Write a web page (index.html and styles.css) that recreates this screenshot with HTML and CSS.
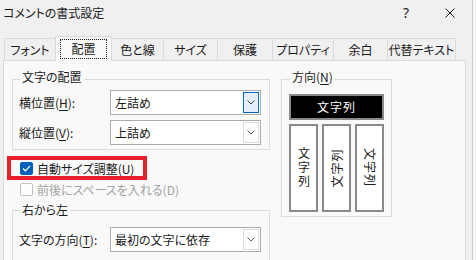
FILE: index.html
```html
<!DOCTYPE html>
<html lang="ja">
<head>
    <meta charset="UTF-8">
    <title>コメントの書式設定</title>
    <link rel="stylesheet" href="styles.css">
</head>
<body>
    <div class="dialog">
        <div class="titlebar">
            <span class="title">コメントの書式設定</span>
            <span class="title-btn help">?</span>
            <span class="title-btn close">
                <svg width="10" height="10" viewBox="0 0 10 10"><path d="M0.5 0.5L9.5 9.5M9.5 0.5L0.5 9.5" stroke="#1f1f1f" stroke-width="1"/></svg>
            </span>
        </div>

        <div class="tabs">
            <div class="tab">フォント</div>
            <div class="tab active"><span class="focus">配置</span></div>
            <div class="tab">色と線</div>
            <div class="tab">サイズ</div>
            <div class="tab">保護</div>
            <div class="tab">プロパティ</div>
            <div class="tab">余白</div>
            <div class="tab">代替テキスト</div>
        </div>

        <div class="panel">
            <div class="left-col">
                <div class="group group-align">
                    <div class="group-title">文字の配置</div>
                    <div class="field">
                        <span class="field-label">横位置(<u>H</u>):</span>
                        <div class="combo">
                            <span class="combo-text">左詰め</span>
                            <span class="combo-btn focused">
                                <svg width="8" height="5" viewBox="0 0 8 5"><path d="M0.5 0.5L4 4L7.5 0.5" fill="none" stroke="#404040"/></svg>
                            </span>
                        </div>
                    </div>
                    <div class="field">
                        <span class="field-label">縦位置(<u>V</u>):</span>
                        <div class="combo">
                            <span class="combo-text">上詰め</span>
                            <span class="combo-btn">
                                <svg width="8" height="5" viewBox="0 0 8 5"><path d="M0.5 0.5L4 4L7.5 0.5" fill="none" stroke="#606060"/></svg>
                            </span>
                        </div>
                    </div>
                </div>

                <div class="check-row highlight">
                    <span class="checkbox checked">
                        <svg width="9" height="7" viewBox="0 0 9 7"><path d="M1 3.5L3.4 5.8L8 1" fill="none" stroke="#fff" stroke-width="1.2"/></svg>
                    </span>
                    <span>自動サイズ調整(<u>U</u>)</span>
                </div>
                <div class="check-row disabled">
                    <span class="checkbox"></span>
                    <span>前後にスペースを入れる(D)</span>
                </div>

                <div class="group group-rtl">
                    <div class="group-title">右から左</div>
                    <div class="field">
                        <span class="field-label">文字の方向(<u>T</u>):</span>
                        <div class="combo">
                            <span class="combo-text">最初の文字に依存</span>
                            <span class="combo-btn">
                                <svg width="8" height="5" viewBox="0 0 8 5"><path d="M0.5 0.5L4 4L7.5 0.5" fill="none" stroke="#606060"/></svg>
                            </span>
                        </div>
                    </div>
                </div>
            </div>

            <div class="group group-dir">
                <div class="group-title">方向(<u>N</u>)</div>
                <div class="orient-h">文字列</div>
                <div class="orient-row">
                    <div class="orient-v"><span class="stack">文字列</span></div>
                    <div class="orient-v"><span class="rot-up">文字列</span></div>
                    <div class="orient-v"><span class="rot-down">文字列</span></div>
                </div>
            </div>
        </div>
    </div>
</body>
</html>
```

FILE: styles.css
```css
body {
    margin: 0;
    width: 476px;
    height: 260px;
    overflow: hidden;
    background: #f6f6f6;
    font-family: 'Noto Sans CJK JP', 'Noto Sans', sans-serif;
    font-size: 12px;
    line-height: 16px;
    color: #1a1a1a;
    font-feature-settings: "palt";
}
.dialog {
    width: 472px;
    height: 260px;
    background: #f0f0f0;
    border-right: 1px solid #cfcfcf;
    display: flex;
    flex-direction: column;
}
.titlebar {
    height: 26px;
    display: flex;
    align-items: center;
    padding-left: 3px;
}
.title {
    flex: 1;
}
.title-btn {
    width: 44px;
    height: 26px;
    display: flex;
    align-items: center;
    justify-content: center;
}
.help {
    font-family: 'Noto Sans', sans-serif;
    font-size: 14px;
}
.tabs {
    display: flex;
    align-items: flex-end;
    margin-top: 10px;
    margin-left: 4px;
    height: 24px;
}
.tab {
    height: 22px;
    box-sizing: border-box;
    border: 1px solid #dadada;
    border-bottom: none;
    margin-left: -1px;
    display: flex;
    align-items: center;
    justify-content: center;
    background: #f0f0f0;
}
.tab:first-child { margin-left: 0; width: 52px; }
.tab:nth-child(2) { width: 57px; }
.tab:nth-child(3) { width: 53px; }
.tab:nth-child(4) { width: 55px; }
.tab:nth-child(5) { width: 56px; }
.tab:nth-child(6) { width: 62px; }
.tab:nth-child(7) { width: 55px; }
.tab:nth-child(8) { width: 69px; }
.tab.active {
    height: 25px;
    margin-bottom: -1px;
    background: #f9f9f9;
    position: relative;
    z-index: 1;
}
.focus {
    display: flex;
    align-items: center;
    justify-content: center;
    width: 47px;
    height: 20px;
    box-sizing: border-box;
    border: 1px dotted #1a1a1a;
}
.panel {
    flex: 1;
    margin-left: 3px;
    width: 463px;
    box-sizing: border-box;
    border: 1px solid #dadada;
    border-bottom: none;
    background: #f9f9f9;
    display: flex;
    align-items: flex-start;
    gap: 11px;
    padding: 18px 0 0 8px;
}
.left-col {
    width: 258px;
}
.group {
    border: 1px solid #dcdcdc;
    box-sizing: border-box;
}
.group-title {
    width: fit-content;
    margin: -11px 0 0 1px;
    padding: 0 2px;
    background: #f9f9f9;
}
.group-align,
.group-rtl {
    padding: 0 7px 4px 6px;
}
.group-align .field:first-of-type {
    margin-top: 8px;
}
.field {
    display: flex;
    align-items: center;
    margin-top: 5px;
}
.group-rtl .group-title {
    margin-top: -9px;
}
.group-rtl .field {
    margin-top: 9px;
}
.field-label {
    width: 91px;
}
.combo {
    width: 151px;
    height: 25px;
    box-sizing: border-box;
    border: 1px solid #acacac;
    background: #fff;
    display: flex;
    align-items: center;
    padding: 1px;
}
.combo-text {
    flex: 1;
    padding-left: 3px;
}
.combo-btn {
    width: 16px;
    height: 21px;
    box-sizing: border-box;
    border: 1px solid #dcdcdc;
    background: #fdfdfd;
    display: flex;
    align-items: center;
    justify-content: center;
}
.combo-btn.focused {
    border-color: #0067c0;
    background: #e3effa;
}
.check-row {
    height: 21px;
    display: flex;
    align-items: center;
    gap: 4px;
    padding-left: 8px;
}
.check-row.highlight {
    margin-top: 8px;
    position: relative;
}
.check-row.highlight::after {
    content: "";
    position: absolute;
    left: -5px;
    top: -2px;
    width: 140px;
    height: 24px;
    box-sizing: border-box;
    border: 4px solid #e5212b;
}
.checkbox {
    width: 13px;
    height: 13px;
    box-sizing: border-box;
    border: 1px solid #c2c2c2;
    border-radius: 2px;
    background: #fdfdfd;
    display: flex;
    align-items: center;
    justify-content: center;
}
.checkbox.checked {
    border-color: #005fb8;
    background: #005fb8;
}
.check-row.disabled {
    color: #a3a3a3;
}
.group-rtl {
    margin-top: 10px;
    height: 60px;
}
.group-dir {
    width: 111px;
    padding: 0 7px 4px 7px;
}
.orient-h {
    margin-top: 9px;
    height: 26px;
    box-sizing: border-box;
    border: 2px solid #8a8a8a;
    background: #000;
    color: #fff;
    display: flex;
    align-items: center;
    justify-content: center;
    letter-spacing: 1px;
}
.orient-row {
    display: flex;
    gap: 4px;
    margin-top: 4px;
}
.orient-v {
    width: 29px;
    height: 88px;
    box-sizing: border-box;
    border: 2px solid #8a8a8a;
    background: #fff;
    display: flex;
    align-items: center;
    justify-content: center;
}
.stack {
    writing-mode: vertical-rl;
    text-orientation: upright;
    letter-spacing: 2px;
}
.rot-up {
    display: inline-block;
    white-space: nowrap;
    transform: rotate(-90deg);
    letter-spacing: 1px;
}
.rot-down {
    writing-mode: vertical-rl;
    text-orientation: sideways;
    letter-spacing: 1px;
}
u {
    text-underline-offset: 2px;
}
```
